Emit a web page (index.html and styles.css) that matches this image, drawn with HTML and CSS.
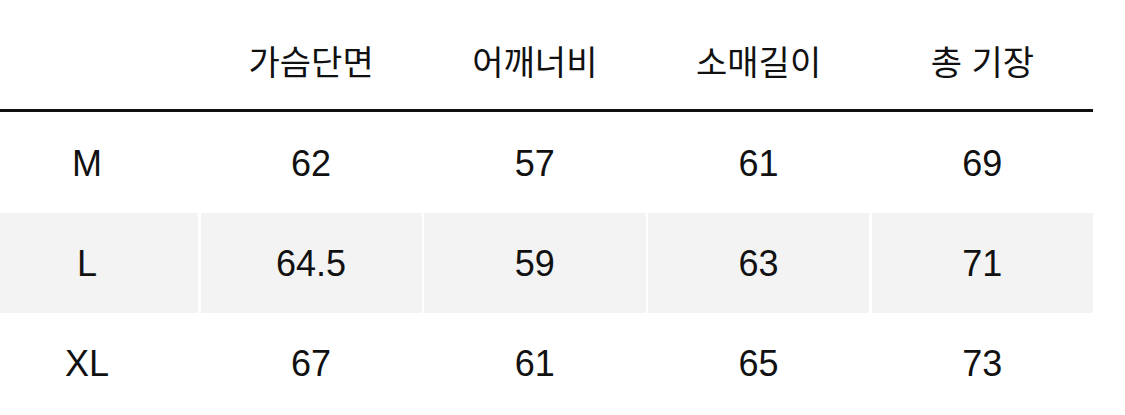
FILE: index.html
```html
<!DOCTYPE html>
<html lang="ko">
<head>
<meta charset="utf-8">
<title>사이즈 표</title>
<link rel="stylesheet" href="styles.css">
</head>
<body>
<div class="sheet">
  <div class="row head">
    <div class="cell size"></div>
    <div class="cell">가슴단면</div>
    <div class="cell">어깨너비</div>
    <div class="cell">소매길이</div>
    <div class="cell">총 기장</div>
  </div>
  <div class="row body first">
    <div class="cell size">M</div>
    <div class="cell">62</div>
    <div class="cell">57</div>
    <div class="cell">61</div>
    <div class="cell">69</div>
  </div>
  <div class="row body alt">
    <div class="cell size">L</div>
    <div class="cell">64.5</div>
    <div class="cell">59</div>
    <div class="cell">63</div>
    <div class="cell">71</div>
  </div>
  <div class="row body">
    <div class="cell size">XL</div>
    <div class="cell">67</div>
    <div class="cell">61</div>
    <div class="cell">65</div>
    <div class="cell">73</div>
  </div>
</div>
</body>
</html>
```
FILE: styles.css
```css
html, body {
  margin: 0;
  padding: 0;
  background: #ffffff;
}

body {
  color: #111111;
  font-family: "Liberation Sans", Arial, "Noto Sans CJK KR", sans-serif;
}

.sheet {
  width: 1093px;
}

.row {
  display: grid;
  grid-template-columns: 198px repeat(4, 1fr);
  column-gap: 2.5px;
}

.cell {
  display: flex;
  align-items: center;
  justify-content: center;
  line-height: 1;
}

.cell.size {
  padding-right: 24px;
}

.head {
  height: 109px;
  border-bottom: 3px solid #111111;
  font-family: "Noto Sans CJK KR", "Noto Sans", sans-serif;
  font-size: 34px;
  font-weight: 400;
}

.head .cell {
  padding-top: 13px;
}

.body {
  height: 100px;
  font-size: 36px;
}

.body.first {
  height: 101px;
}

.body .cell {
  padding-top: 2px;
}

.alt .cell {
  background: #f3f3f3;
}
```
